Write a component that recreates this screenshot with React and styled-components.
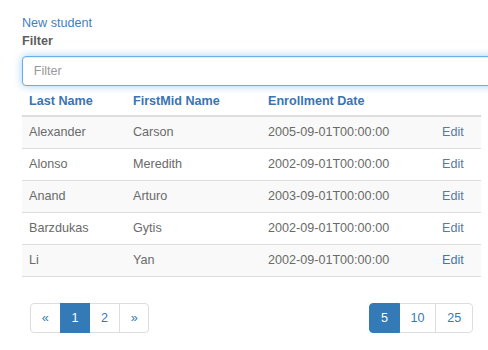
import React, { useEffect, useRef } from "react";
import styled, { createGlobalStyle } from "styled-components";

const Global = createGlobalStyle`
  html, body { margin: 0; padding: 0; overflow: clip; background: #fff; }
  body { font-family: "Liberation Sans", Arial, sans-serif; font-size: 12.6px; color: #666; }
  * { box-sizing: border-box; }
`;

const Page = styled.div`
  padding: 14px 0 0 22px;
  width: 488px;
  overflow: clip;
`;

const Link = styled.a`
  display: block;
  color: #3f7fc0;
  text-decoration: none;
  line-height: 18px;
`;

const Label = styled.label`
  display: block;
  font-weight: bold;
  color: #5e5e5e;
  line-height: 18px;
  margin-bottom: 6px;
`;

const Input = styled.input`
  display: block;
  width: 480px;
  height: 30px;
  padding: 0 10.8px;
  font-family: inherit;
  font-size: 12.6px;
  color: #555;
  border: 1px solid #66afe9;
  border-radius: 4px;
  outline: none;
  box-shadow: inset 0 1px 1px rgba(0, 0, 0, 0.075), 0 0 8px rgba(102, 175, 233, 0.6);
  &::placeholder { color: #999; }
`;

const Table = styled.table`
  width: 459px;
  border-collapse: collapse;
  table-layout: fixed;
`;

const Th = styled.th`
  text-align: left;
  padding: 6px 7px 5px;
  line-height: 18px;
  font-weight: bold;
  color: #3a74b4;
  border-bottom: 2px solid #ddd;
  width: ${(p) => p.$w || "auto"};
`;

const Row = styled.tr`
  background: ${(p) => (p.$striped ? "#f9f9f9" : "#fff")};
`;

const Td = styled.td`
  padding: 7px;
  line-height: 17px;
  border-bottom: 1px solid #ddd;
  color: #6a6a6a;
  white-space: nowrap;
`;

const EditLink = styled.a`
  color: ${(p) => (p.$active ? "#337ab7" : "#587a9c")};
  text-decoration: none;
`;

const Footer = styled.div`
  width: 459px;
  display: flex;
  justify-content: space-between;
  padding: 0 8px;
  margin-top: 26px;
`;

const Pager = styled.ul`
  display: flex;
  list-style: none;
  margin: 0;
  padding: 0;
`;

const PageBtn = styled.li`
  height: 30px;
  padding: 0 10.8px;
  display: flex;
  align-items: center;
  justify-content: center;
  line-height: 18px;
  border: 1px solid ${(p) => (p.$active ? "#337ab7" : "#ddd")};
  background: ${(p) => (p.$active ? "#337ab7" : "#fff")};
  color: ${(p) => (p.$active ? "#fff" : "#337ab7")};
  margin-left: -1px;
  position: relative;
  z-index: ${(p) => (p.$active ? 2 : 1)};
  &:first-child {
    margin-left: 0;
    border-radius: 4px 0 0 4px;
  }
  &:last-child {
    border-radius: 0 4px 4px 0;
  }
`;

const students = [
  ["Alexander", "Carson", "2005-09-01T00:00:00"],
  ["Alonso", "Meredith", "2002-09-01T00:00:00"],
  ["Anand", "Arturo", "2003-09-01T00:00:00"],
  ["Barzdukas", "Gytis", "2002-09-01T00:00:00"],
  ["Li", "Yan", "2002-09-01T00:00:00"],
];

export default function App() {
  const inputRef = useRef(null);
  useEffect(() => {
    if (inputRef.current) inputRef.current.focus({ preventScroll: true });
    window.scrollTo(0, 0);
  }, []);
  return (
    <Page>
      <Global />
      <Link href="#">New student</Link>
      <Label htmlFor="filter">Filter</Label>
      <Input id="filter" ref={inputRef} placeholder="Filter" />
      <Table>
        <thead>
          <tr>
            <Th $w="104px">Last Name</Th>
            <Th $w="135px">FirstMid Name</Th>
            <Th $w="174px">Enrollment Date</Th>
            <Th />
          </tr>
        </thead>
        <tbody>
          {students.map((s, i) => (
            <Row key={i} $striped={i % 2 === 0}>
              <Td>{s[0]}</Td>
              <Td>{s[1]}</Td>
              <Td>{s[2]}</Td>
              <Td>
                <EditLink href="#" $active={i === students.length - 1}>Edit</EditLink>
              </Td>
            </Row>
          ))}
        </tbody>
      </Table>
      <Footer>
        <Pager>
          <PageBtn>«</PageBtn>
          <PageBtn $active>1</PageBtn>
          <PageBtn>2</PageBtn>
          <PageBtn>»</PageBtn>
        </Pager>
        <Pager>
          <PageBtn $active>5</PageBtn>
          <PageBtn>10</PageBtn>
          <PageBtn>25</PageBtn>
        </Pager>
      </Footer>
    </Page>
  );
}
